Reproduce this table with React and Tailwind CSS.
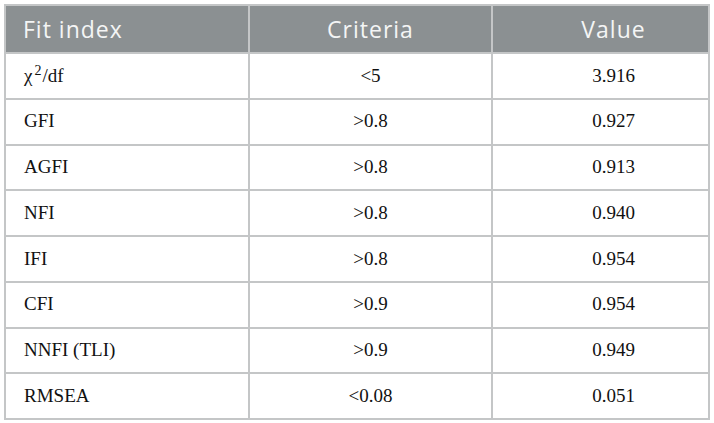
import React from 'react';

const rows = [
  { index: <>χ<sup className="text-[14px] relative top-[1px] align-super leading-none ml-[2px] mr-[1px]">2</sup>/df</>, criteria: '<5', value: '3.916' },
  { index: 'GFI', criteria: '>0.8', value: '0.927' },
  { index: 'AGFI', criteria: '>0.8', value: '0.913' },
  { index: 'NFI', criteria: '>0.8', value: '0.940' },
  { index: 'IFI', criteria: '>0.8', value: '0.954' },
  { index: 'CFI', criteria: '>0.9', value: '0.954' },
  { index: 'NNFI (TLI)', criteria: '>0.9', value: '0.949' },
  { index: 'RMSEA', criteria: '<0.08', value: '0.051' },
];

export default function App() {
  return (
    <div className="w-[714px] h-[423px] bg-white pt-[4px] pl-[4px]">
      <table className="w-[704px] border-collapse table-fixed">
        <colgroup>
          <col className="w-[244px]" />
          <col className="w-[243px]" />
          <col className="w-[217px]" />
        </colgroup>
        <thead>
          <tr className="h-[48px] bg-[#8b9092] text-[#f4f5f5] font-['Open_Sans',sans-serif] text-[23px] tracking-[1px]">
            <th className="border-2 border-[#c4c6c7] text-left font-normal pl-[17px]">Fit index</th>
            <th className="border-2 border-[#c4c6c7] text-center font-normal">Criteria</th>
            <th className="border-2 border-[#c4c6c7] text-center font-normal pl-[26px]">Value</th>
          </tr>
        </thead>
        <tbody className="font-['Liberation_Serif',serif] text-[19px] text-[#111]">
          {rows.map((r, i) => (
            <tr key={i} className="h-[45.75px]">
              <td className="border-2 border-[#c4c6c7] pl-[18px]">{r.index}</td>
              <td className="border-2 border-[#c4c6c7] text-center">{r.criteria}</td>
              <td className="border-2 border-[#c4c6c7] text-center pl-[26px]">{r.value}</td>
            </tr>
          ))}
        </tbody>
      </table>
    </div>
  );
}
